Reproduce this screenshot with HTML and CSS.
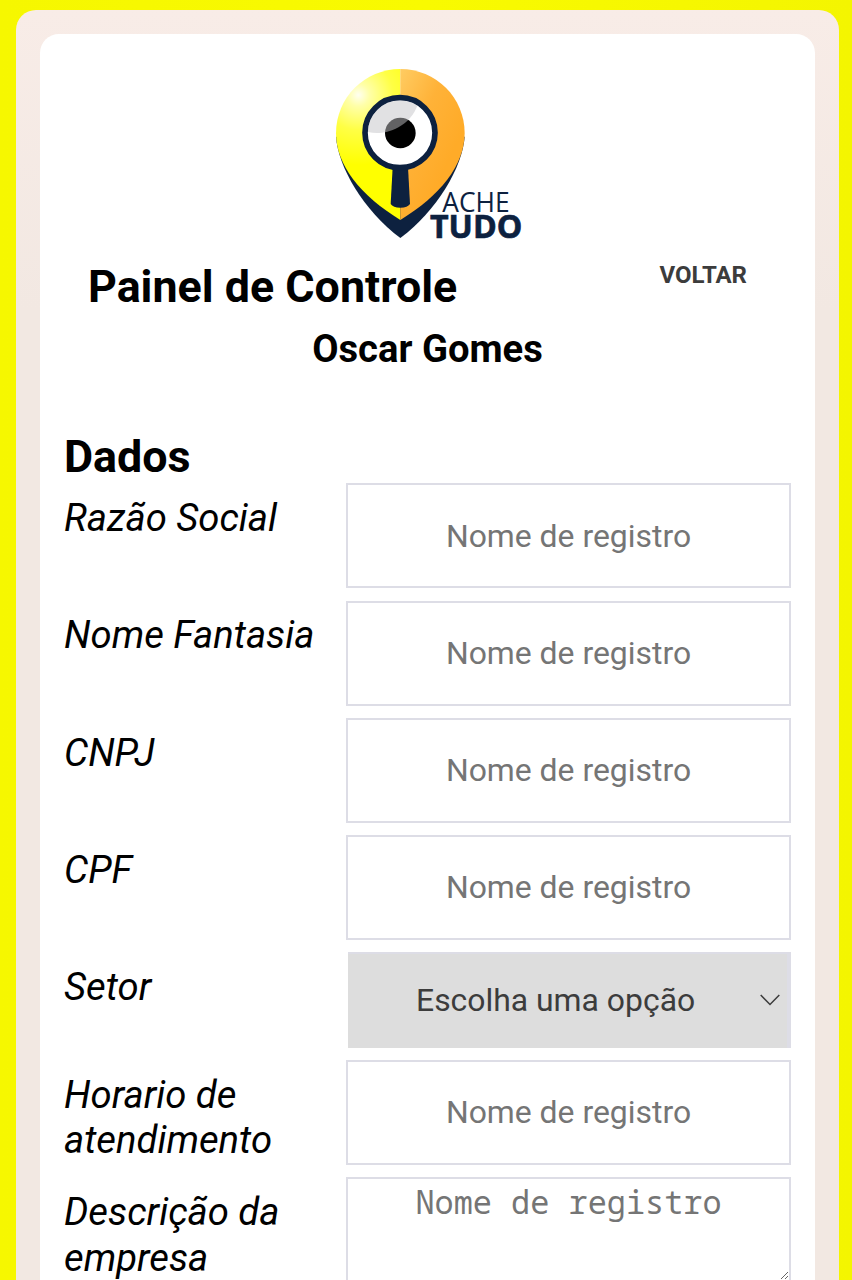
FILE: index.html
```html
<!DOCTYPE html>
<html lang="pt-BR">
<head>
<meta charset="utf-8">
<title>Painel de Controle</title>
<link rel="stylesheet" href="styles.css">
</head>
<body>
<div class="frame">
  <main class="panel">
    <svg class="logo" viewBox="0 0 660 570" role="img" aria-label="Ache Tudo">
      <defs>
        <radialGradient id="yellow" gradientUnits="userSpaceOnUse" cx="115" cy="105" r="210">
          <stop offset="0" stop-color="#fffff0"/>
          <stop offset=".16" stop-color="#ffffa8"/>
          <stop offset=".5" stop-color="#ffff45"/>
          <stop offset="1" stop-color="#ffff00"/>
        </radialGradient>
        <linearGradient id="orange" x1="0" y1="0" x2=".65" y2=".7">
          <stop offset="0" stop-color="#ffcc62"/>
          <stop offset=".5" stop-color="#ffb238"/>
          <stop offset="1" stop-color="#ffab28"/>
        </linearGradient>
      </defs>
      <path fill="#0d213f" d="M48 230C54 320 130 450 241 534C352 450 428 320 434 230Z"/>
      <path fill="url(#yellow)" d="M241 27C134 27 48 113 48 220C48 315 122 408 241 480Z"/>
      <path fill="url(#orange)" d="M241 27C348 27 434 113 434 220C434 315 360 408 241 480Z"/>
      <path fill="#0d213f" d="M218 322H264L270 432Q263 443 241 443Q219 443 212 432Z"/>
      <circle cx="240" cy="218" r="105" fill="#fff" stroke="#0d213f" stroke-width="17"/>
      <circle cx="241" cy="219" r="46" fill="#000"/>
      <path fill="#c4c4c8" fill-opacity=".5" d="M144 216A96 96 0 0 1 292 137C270 195 205 229 144 216Z"/>
      <text class="logo-ache" x="367" y="456" textLength="202" lengthAdjust="spacingAndGlyphs">ACHE</text>
      <text class="logo-tudo" x="330" y="535" textLength="277" lengthAdjust="spacingAndGlyphs">TUDO</text>
    </svg>
    <header class="header">
      <h1 class="title">Painel de Controle</h1>
      <a class="back">VOLTAR</a>
    </header>
    <h2 class="user">Oscar Gomes</h2>
    <h3 class="section">Dados</h3>
    <form class="form">
      <label class="label" for="razao">Razão Social</label>
      <input class="field" id="razao" placeholder="Nome de registro">
      <label class="label" for="fantasia">Nome Fantasia</label>
      <input class="field" id="fantasia" placeholder="Nome de registro">
      <label class="label" for="cnpj">CNPJ</label>
      <input class="field" id="cnpj" placeholder="Nome de registro">
      <label class="label" for="cpf">CPF</label>
      <input class="field" id="cpf" placeholder="Nome de registro">
      <label class="label">Setor</label>
      <div class="select" role="combobox">
        <span class="select-text">Escolha uma opção</span>
        <svg class="chevron" viewBox="0 0 20 12"><path d="M.7 1L10 10.5L19.3 1" fill="none" stroke="#3c3c3c" stroke-width="1.5"/></svg>
      </div>
      <label class="label" for="horario">Horario de atendimento</label>
      <input class="field" id="horario" placeholder="Nome de registro">
      <label class="label" for="descricao">Descrição da empresa</label>
      <textarea class="field area" id="descricao" placeholder="Nome de registro"></textarea>
    </form>
  </main>
</div>
</body>
</html>
```
FILE: styles.css
```css
* {
  box-sizing: border-box;
}

html {
  height: 100%;
  overflow: hidden;
}

body {
  margin: 0;
  height: 1280px;
  overflow: hidden;
  padding: 10px 13px 0 16px;
  background: linear-gradient(90deg, #f6f700, #f9fa00 50%, #f4f500);
  font-family: Roboto, sans-serif;
  color: #000;
}

.frame {
  height: 1270px;
  padding: 24px 24px 0;
  border-radius: 20px 20px 0 0;
  background: linear-gradient(#f8ece7, #f2e8e2 300px);
}

.panel {
  height: 1246px;
  overflow: hidden;
  padding: 26px 24px 0;
  border-radius: 19px 19px 0 0;
  background: #fff;
}

.logo {
  display: block;
  width: 220px;
  height: 190px;
  margin-left: 256px;
}

.logo-ache,
.logo-tudo {
  font-family: "Open Sans", "Noto Sans", sans-serif;
  fill: #0d213f;
}

.logo-ache {
  font-size: 84px;
}

.logo-tudo {
  font-size: 98px;
  font-weight: 700;
  stroke: #0d213f;
  stroke-width: 2px;
}

.header {
  display: flex;
  justify-content: space-between;
  height: 76px;
  padding: 11px 44px 0 24px;
}

.title {
  margin: 0;
  font-size: 44.8px;
  line-height: 52px;
  font-weight: 700;
}

.back {
  font-size: 24px;
  line-height: 28px;
  font-weight: 700;
  color: #3c3c3c;
}

.user {
  margin: 0;
  height: 105px;
  font-size: 38.2px;
  line-height: 46px;
  font-weight: 700;
  text-align: center;
}

.section {
  margin: 0;
  height: 52.4px;
  font-size: 44.8px;
  line-height: 52px;
  font-weight: 700;
}

.form {
  display: grid;
  grid-template-columns: 282px 445px;
  row-gap: 12.2px;
}

.label {
  padding-top: 12.8px;
  font-size: 38.25px;
  line-height: 45.6px;
  font-style: italic;
}

.field {
  width: 445px;
  height: 105px;
  margin: 0;
  padding: 0 8px;
  border: 2.5px solid #dddde6;
  border-radius: 0;
  background: #fff;
  font-family: Roboto, sans-serif;
  font-size: 31.9px;
  text-align: center;
}

.field::placeholder {
  color: #757575;
  opacity: 1;
}

.area {
  padding-top: 1px;
  font-family: "Noto Sans Mono", "DejaVu Sans Mono", monospace;
}

.select {
  display: flex;
  align-items: center;
  justify-content: space-between;
  height: 95.6px;
  margin-left: 2px;
  padding: 0 7px 2px 68px;
  border: solid #dddde6;
  border-width: 2px 4px 0 0;
  background: #ddd;
  color: #3c3c3c;
  font-size: 31.9px;
}

.chevron {
  width: 20px;
  height: 12px;
}
```
